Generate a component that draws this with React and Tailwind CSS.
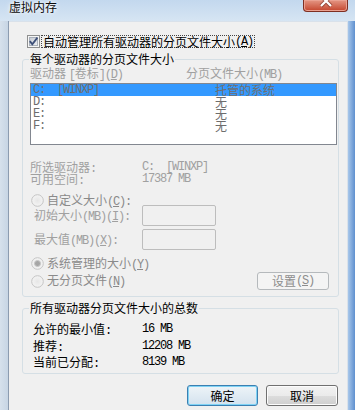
import React from "react";

const MONO = "[font-family:'Liberation_Mono',monospace] tracking-[-1.2px]";

function M({ children }) {
  return <span className={MONO}>{children}</span>;
}

function Key({ pre = "(", k, post = ")" }) {
  return (
    <span className={MONO}>
      {pre}
      <span className="underline underline-offset-[1px]">{k}</span>
      {post}
    </span>
  );
}

function CheckBox() {
  return (
    <svg width="13" height="13" viewBox="0 0 13 13" className="shrink-0">
      <defs>
        <linearGradient id="cbg" x1="0" y1="0" x2="1" y2="1">
          <stop offset="0" stopColor="#c6cbd2" />
          <stop offset="1" stopColor="#eef1f5" />
        </linearGradient>
      </defs>
      <rect x="0.5" y="0.5" width="12" height="12" fill="#f6f6f6" stroke="#8e8f8f" />
      <rect x="2.5" y="2.5" width="8" height="8" fill="url(#cbg)" stroke="#a9b0ba" />
      <path d="M2.8 6.2 L5.3 9.2 L10.4 2.6" stroke="#3d4f78" strokeWidth="1.8" fill="none" />
    </svg>
  );
}

function Radio({ checked }) {
  return (
    <svg width="13" height="13" viewBox="0 0 13 13" className="shrink-0">
      <defs>
        <radialGradient id="rg" cx="0.5" cy="0.5" r="0.6">
          <stop offset="0" stopColor="#e6e6e6" />
          <stop offset="1" stopColor="#f7f7f7" />
        </radialGradient>
      </defs>
      <circle cx="6.5" cy="6.5" r="5.8" fill="url(#rg)" stroke="#c4c4c4" />
      {checked && <circle cx="6.5" cy="6.5" r="3" fill="#a6a6a6" stroke="#c8c8c8" />}
    </svg>
  );
}

export default function App() {
  return (
    <div className="w-[355px] h-[410px] overflow-hidden flex flex-col text-[12px] leading-[12px] [font-family:'Noto_Sans_CJK_SC','Noto_Sans',sans-serif] text-black bg-[#c9dbee]">
      {/* title bar */}
      <div className="h-[21px] shrink-0 flex items-start bg-gradient-to-b from-[#c3d8ee] to-[#d6e5f3]">
        <span className="ml-[9px] leading-[14px] text-[#0a0a0a] [text-shadow:0_0_6px_#fff,0_0_3px_#fff]">虚拟内存</span>
        <div className="ml-auto mr-[7px] w-[45px] h-[12px] rounded-b-[4px] border border-t-0 border-[#7e2f22] bg-gradient-to-b from-[#e49684] to-[#c3432b] shadow-[inset_0_0_0_1px_#eaa191] overflow-hidden">
          <svg width="45" height="11" viewBox="0 0 45 11">
            <path d="M17 -4 L27 6 M27 -4 L17 6" stroke="#5a1a10" strokeWidth="4" strokeOpacity="0.5" fill="none" />
            <path d="M17 -4 L27 6 M27 -4 L17 6" stroke="#ffffff" strokeWidth="2.2" fill="none" />
          </svg>
        </div>
      </div>

      <div className="flex flex-1">
        {/* left frame */}
        <div className="w-[9px] shrink-0 bg-gradient-to-r from-[#d6e1ec] to-[#c7d5e4] border-r border-[#8c9cb0]" />

        {/* client */}
        <div className="flex-1 bg-[#f0f0f0] border-t border-r border-[#d9e1ea] flex flex-col">
          {/* checkbox row */}
          <div className="mt-[13px] ml-[18px] h-[13px] flex items-center">
            <CheckBox />
            <span className="ml-[1px] border border-dotted border-[#444] px-[1px] h-[13px] flex items-center">
              自动管理所有驱动器的分页文件大小<Key k="A" />
            </span>
          </div>

          {/* group 1 */}
          <fieldset className="mt-[5px] ml-[13px] w-[317px] border border-[#d5dfe5] rounded-[3px] pb-[6px]">
            <legend className="ml-[6px] px-[1px] leading-[12px]">每个驱动器的分页文件大小</legend>

            <div className="mt-[2px] ml-[7px] h-[12px] flex text-[#a0a0a0]">
              <span className="w-[156px]">
                驱动器 <M>[</M>卷标<M>]</M>
                <Key k="D" />
              </span>
              <span>
                分页文件大小<M>(MB)</M>
              </span>
            </div>

            <div className="mt-[4px] ml-[7px] w-[307px] h-[62px] border border-[#828790] bg-white text-[#6d6d6d]">
              <div className="h-[12px] flex bg-[#3399ff] text-[#6f6f6f]">
                <span className={`w-[184px] pl-[2px] ${MONO}`}>C:{"\u00a0\u00a0"}[WINXP]</span>
                <span>托管的系统</span>
              </div>
              <div className="h-[12px] flex">
                <span className={`w-[184px] pl-[2px] ${MONO}`}>D:</span>
                <span>无</span>
              </div>
              <div className="h-[12px] flex">
                <span className={`w-[184px] pl-[2px] ${MONO}`}>E:</span>
                <span>无</span>
              </div>
              <div className="h-[12px] flex">
                <span className={`w-[184px] pl-[2px] ${MONO}`}>F:</span>
                <span>无</span>
              </div>
            </div>

            <div className="mt-[16px] ml-[7px] grid grid-cols-[112px_1fr] text-[#a0a0a0]">
              <span className="h-[12px]">所选驱动器<M>:</M></span>
              <span className={MONO}>C:{"\u00a0\u00a0"}[WINXP]</span>
              <span className="h-[12px]">可用空间<M>:</M></span>
              <span className={MONO}>17387 MB</span>
            </div>

            <div className="mt-[9px] ml-[8px] h-[11px] flex items-start gap-[3px] text-[#8a8a8a]">
              <Radio />
              <span>
                自定义大小<Key k="C" />
                <M>:</M>
              </span>
            </div>

            <div className="ml-[11px] h-[21px] flex items-center text-[#a0a0a0]">
              <span className="w-[108px]">
                初始大小<M>(MB)</M>
                <Key k="I" />
                <M>:</M>
              </span>
              <div className="w-[74px] h-[21px] border border-[#bdbdbd] rounded-[2px] bg-[#f0f0f0]" />
            </div>

            <div className="mt-[3px] ml-[11px] h-[21px] flex items-center text-[#a0a0a0]">
              <span className="w-[108px]">
                最大值<M>(MB)</M>
                <Key k="X" />
                <M>:</M>
              </span>
              <div className="w-[74px] h-[21px] border border-[#bdbdbd] rounded-[2px] bg-[#f0f0f0]" />
            </div>

            <div className="mt-[7px] ml-[8px] h-[13px] flex items-center gap-[3px] text-[#8a8a8a]">
              <Radio checked />
              <span>
                系统管理的大小<Key k="Y" />
              </span>
            </div>

            <div className="mt-[2px] ml-[8px] h-[18px] flex items-center gap-[3px] text-[#8a8a8a]">
              <Radio />
              <span>
                无分页文件<Key k="N" />
              </span>
              <div className="ml-auto mr-[9px] w-[72px] h-[18px] border border-[#b5b9bc] rounded-[3px] bg-[#f4f4f4] flex items-center justify-center text-[#8d8d8d]">
                设置<Key k="S" />
              </div>
            </div>
          </fieldset>

          {/* group 2 */}
          <fieldset className="mt-[5px] ml-[13px] w-[317px] border border-[#d5dfe5] rounded-[3px] pb-[5px]">
            <legend className="ml-[6px] px-[1px] leading-[12px]">所有驱动器分页文件大小的总数</legend>
            <div className="ml-[10px] mt-[9px] flex flex-col">
              <div className="h-[12px] flex">
                <span className="w-[109px]">允许的最小值<M>:</M></span>
                <span className={MONO}>16 MB</span>
              </div>
              <div className="mt-[5px] h-[12px] flex">
                <span className="w-[109px]">推荐<M>:</M></span>
                <span className={MONO}>12208 MB</span>
              </div>
              <div className="mt-[4px] h-[12px] flex">
                <span className="w-[109px]">当前已分配<M>:</M></span>
                <span className={MONO}>8139 MB</span>
              </div>
            </div>
          </fieldset>

          {/* buttons */}
          <div className="mt-[11px] mr-[9px] flex justify-end gap-[8px]">
            <div className="w-[71px] h-[21px] rounded-[3px] border border-[#3c7fb1] shadow-[inset_0_0_0_1px_#7fd3f5] bg-gradient-to-b from-[#eef4f8] to-[#d3e2ee] flex items-center justify-center">
              确定
            </div>
            <div className="w-[72px] h-[21px] rounded-[3px] border border-[#707070] shadow-[inset_0_0_0_1px_#fcfcfc] bg-[linear-gradient(#f2f2f2,#ebebeb_50%,#dddddd_50%,#cfcfcf)] flex items-center justify-center">
              取消
            </div>
          </div>
        </div>

        {/* right frame */}
        <div className="w-[7px] shrink-0 bg-gradient-to-r from-[#a8c7ea] to-[#5f90cf]" />
      </div>
    </div>
  );
}
